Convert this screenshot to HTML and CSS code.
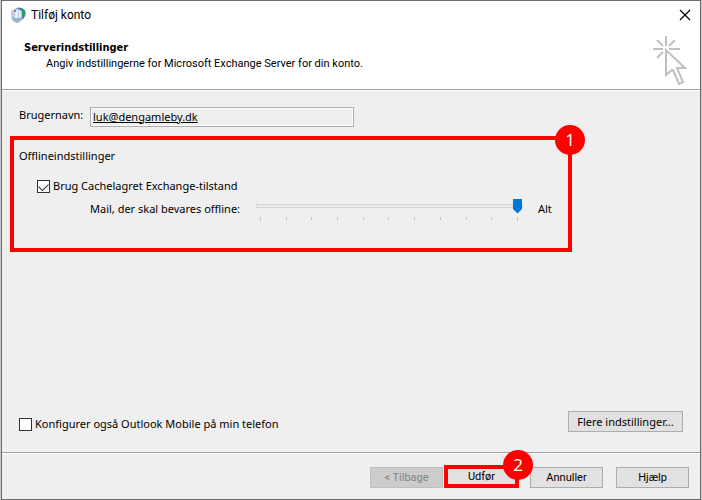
FILE: index.html
```html
<!DOCTYPE html>
<html lang="da">
<head>
    <meta charset="UTF-8">
    <meta name="viewport" content="width=device-width, initial-scale=1.0">
    <title>Tilføj konto</title>
    <link rel="stylesheet" href="styles.css">
</head>
<body>
    <div class="window">
        <header>
            <div class="titlebar">
                <svg class="app-icon" width="16" height="16" viewBox="0 0 16 16" aria-hidden="true">
                    <circle cx="9" cy="7" r="6.5" fill="#3a7fc4"/>
                    <path d="M11 1c4 1 5 4 4 7l-2 2-1-4z" fill="#2f9a5c"/>
                    <path d="M1 4l6-3 5 3v8l-5 4-5-4z" fill="#a9c3da"/>
                    <path d="M3 4l5-1 3 2v6H4z" fill="#e8f0f8"/>
                    <path d="M1 10l6 1 6-1-2 4-4 2-4-2z" fill="#9db3cd"/>
                    <path d="M4 5h1v5H4zM8 5h1v5H8z" fill="#a9c0dc"/>
                    <path d="M4 3h2v2H4z" fill="#e8663a"/>
                </svg>
                <span class="title">Tilføj konto</span>
                <button class="close" type="button" aria-label="Luk">
                    <svg width="12" height="12" viewBox="0 0 12 12"><path d="M1 1l10 10M11 1L1 11" stroke="#000" stroke-width="1.2"/></svg>
                </button>
            </div>
            <div class="heading">
                <div>
                    <h1>Serverindstillinger</h1>
                    <p>Angiv indstillingerne for Microsoft Exchange Server for din konto.</p>
                </div>
                <svg class="cursor-icon" width="34" height="50" viewBox="0 0 34 50" fill="none" stroke="#c0c0c0" stroke-width="2" aria-hidden="true">
                    <path d="M13 0v10M0 13h10M16 13h11M4 4l6 6M22 4l-6 6M4 22l6-6"/>
                    <path d="M13 14v25l6-5h1l6 14 4-2-6-14h8z"/>
                </svg>
            </div>
        </header>

        <main>
            <div class="user-row">
                <label for="username">Brugernavn:</label>
                <input type="text" id="username" value="luk@dengamleby.dk" readonly>
            </div>

            <section class="offline">
                <span class="badge">1</span>
                <h2>Offlineindstillinger</h2>
                <label class="check cached">
                    <input type="checkbox" checked>
                    Brug Cachelagret Exchange-tilstand
                </label>
                <div class="slider-row">
                    <label for="offline-mail">Mail, der skal bevares offline:</label>
                    <div class="slider">
                        <input type="range" id="offline-mail" min="0" max="10" value="10">
                        <div class="ticks">
                            <i></i><i></i><i></i><i></i><i></i><i></i><i></i><i></i><i></i><i></i><i></i>
                        </div>
                    </div>
                    <output for="offline-mail">Alt</output>
                </div>
            </section>

            <div class="bottom-row">
                <label class="check">
                    <input type="checkbox">
                    Konfigurer også Outlook Mobile på min telefon
                </label>
                <button class="more" type="button">Flere indstillinger...</button>
            </div>
        </main>

        <footer>
            <button type="button" disabled>&lt; Tilbage</button>
            <div class="marked">
                <button type="button">Udfør</button>
                <span class="badge">2</span>
            </div>
            <button type="button">Annuller</button>
            <button type="button">Hjælp</button>
        </footer>
    </div>
</body>
</html>
```
FILE: styles.css
```css
* {
    box-sizing: border-box;
}
body {
    margin: 0;
    padding: 0 1px;
    background: #c8c8c8;
    color: #000;
    font-family: "Noto Sans", "Open Sans", sans-serif;
    font-size: 11px;
    line-height: 16px;
}
.window {
    display: flex;
    flex-direction: column;
    min-height: 100vh;
    border: 1px solid #6d6d6d;
    background: #efefef;
}
header {
    padding-bottom: 3px;
    background: #fff;
    border-bottom: 1px solid #a0a0a0;
    box-shadow: 0 1px #fff;
}
.titlebar {
    display: flex;
    align-items: center;
    height: 28px;
    padding: 0 9px 0 8px;
}
.title {
    flex: 1;
    margin-left: 5px;
    font-family: Roboto, sans-serif;
    font-size: 12px;
}
.close {
    display: flex;
    width: 12px;
    min-width: 0;
    height: 12px;
    padding: 0;
    border: 0;
    background: none;
}
.heading {
    display: flex;
    justify-content: space-between;
    padding: 7px 13px 0 22px;
}
.heading h1 {
    margin: 4px 0 0;
    font-family: "DejaVu Sans Condensed", "DejaVu Sans", sans-serif;
    font-stretch: condensed;
    font-size: 11px;
    line-height: 16px;
}
.heading p {
    margin: 0 0 0 22px;
    font-family: Roboto, sans-serif;
    line-height: 16px;
}
main {
    display: flex;
    flex: 1;
    flex-direction: column;
    padding: 17px 17px 20px 8px;
}
.user-row {
    display: flex;
    align-items: flex-start;
    padding-left: 9px;
}
.user-row label {
    width: 71px;
}
.user-row input {
    width: 264px;
    height: 20px;
    padding: 0 2px 2px;
    border: 1px solid #abadb3;
    box-shadow: inset 0 0 0 1px #fff;
    background: #efefef;
    font: inherit;
    text-decoration: underline;
}
.offline {
    position: relative;
    width: 562px;
    max-width: 100%;
    height: 116px;
    margin-top: 9px;
    padding: 8px 5px;
    border: 4px solid #f00;
}
.offline h2 {
    margin: 0;
    font-size: 11px;
    font-weight: normal;
}
.badge {
    position: absolute;
    top: -15px;
    right: -17px;
    width: 30px;
    height: 30px;
    border-radius: 50%;
    background: #f00;
    color: #fff;
    font-size: 17px;
    line-height: 29px;
    text-align: center;
}
.check {
    display: flex;
    align-items: center;
    gap: 3px;
}
.check input {
    appearance: none;
    width: 13px;
    height: 13px;
    margin: 0;
    border: 1px solid #333;
    background: #fff;
}
.check input:checked::after {
    content: "";
    display: block;
    width: 9px;
    height: 5px;
    margin: 2px 1px;
    border: solid #333;
    border-width: 0 0 1px 1px;
    transform: rotate(-45deg);
}
.check input:checked {
    display: flex;
    align-items: flex-start;
}
.cached {
    margin: 14px 0 0 18px;
}
.slider-row {
    display: flex;
    align-items: flex-start;
    margin-top: 6px;
    padding-left: 71px;
}
.slider-row label {
    width: 166px;
    margin-top: 1px;
    white-space: nowrap;
}
.slider {
    width: 267px;
}
.slider input {
    appearance: none;
    display: block;
    width: 100%;
    height: 4px;
    margin: 4px 0 0;
    padding: 0;
    border: 1px solid #d6d6d6;
    background: #e7eaea;
}
.slider input::-webkit-slider-thumb {
    appearance: none;
    width: 9px;
    height: 15px;
    background: #0078d7;
    clip-path: polygon(0 0, 100% 0, 100% 70%, 50% 100%, 0 70%);
}
.ticks {
    display: flex;
    justify-content: space-between;
    margin-top: 9px;
    padding: 0 5px 0 4px;
}
.ticks i {
    width: 1px;
    height: 3px;
    background: #c4c4c4;
}
.ticks i:first-child,
.ticks i:last-child {
    height: 4px;
}
.slider-row output {
    margin: 1px 0 0 15px;
}
.bottom-row {
    display: flex;
    align-items: flex-end;
    justify-content: space-between;
    margin-top: auto;
    padding-left: 9px;
}
button {
    min-width: 73px;
    height: 21px;
    padding: 0;
    border: 1px solid #adadad;
    background: #e1e1e1;
    color: #000;
    font: inherit;
    line-height: 19px;
}
button:disabled {
    border-color: #bfbfbf;
    background: #ccc;
    color: #838383;
}
.more {
    width: 115px;
}
footer {
    display: flex;
    justify-content: flex-end;
    align-items: flex-end;
    padding: 12px 11px 11px;
    border-top: 1px solid #a0a0a0;
    box-shadow: inset 0 1px #fff;
}
footer button {
    margin-left: 13px;
    font-family: Roboto, sans-serif;
}
.marked {
    position: relative;
    margin: 0 -2px 0 1px;
}
.marked button {
    display: block;
    width: 75px;
    height: 23px;
    margin: 0;
    padding-top: 1px;
    border: 4px solid #f00;
    line-height: 14px;
}
.marked .badge {
    right: -14px;
}
```
